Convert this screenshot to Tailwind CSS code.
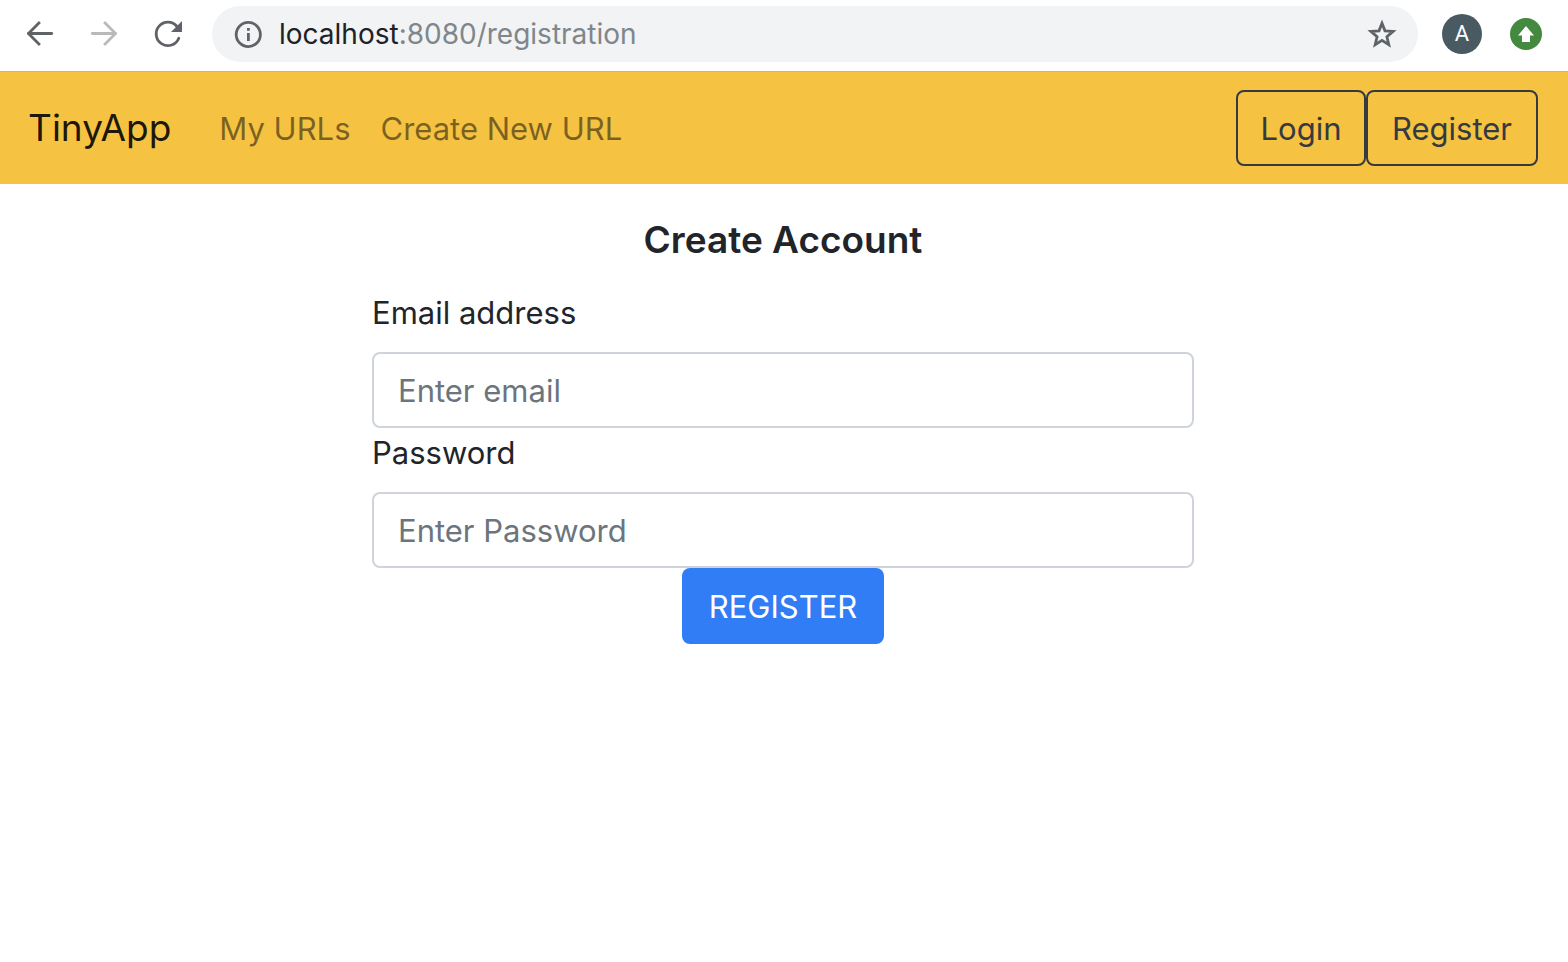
<!DOCTYPE html>
<html lang="en">
<head>
<meta charset="utf-8">
<meta name="viewport" content="width=device-width, initial-scale=1">
<title>TinyApp</title>
<script src="https://cdn.jsdelivr.net/npm/@tailwindcss/browser@4"></script>
</head>
<body class="min-h-screen bg-white font-['Inter',sans-serif] text-[31px] leading-[50px] text-[#212529]">
<header class="flex h-[72px] items-center border-b border-[#b6b6b6] pt-0 pr-[26px] pb-[3px] pl-6">
  <button type="button" aria-label="Back" class="mr-8 flex size-8 items-center justify-center">
    <svg class="size-8" viewBox="0 0 32 32" fill="none" stroke="#5f6368" stroke-width="2.8" stroke-linecap="round" stroke-linejoin="round"><path d="M27.7 15.5H4.5"/><path d="M15.9 4.1L4.5 15.5l11.4 11.4" stroke-linecap="butt"/></svg>
  </button>
  <button type="button" aria-label="Forward" class="mr-8 flex size-8 items-center justify-center">
    <svg class="size-8" viewBox="0 0 32 32" fill="none" stroke="#bababa" stroke-width="2.8" stroke-linecap="round" stroke-linejoin="round"><path d="M4.3 15.5h23.2"/><path d="M16.1 4.1l11.4 11.4-11.4 11.4" stroke-linecap="butt"/></svg>
  </button>
  <button type="button" aria-label="Reload" class="mr-7 flex size-8 items-center justify-center">
    <svg class="size-8" viewBox="0 0 32 32"><path d="M26.8 20.2A11.7 11.7 0 1 1 25 8.5" fill="none" stroke="#5f6368" stroke-width="2.8" stroke-linecap="round"/><path d="M30 3v11H19z" fill="#5f6368"/></svg>
  </button>
  <div class="flex h-14 flex-1 items-center rounded-full bg-[#f1f3f4] pr-5 pl-5">
    <svg class="mr-3 size-8 shrink-0" viewBox="0 0 32 32"><circle cx="16.3" cy="16.5" r="12.1" fill="none" stroke="#5f6368" stroke-width="2.8"/><path d="M15 10h2.8v2.7H15zM15 15h2.8v8H15z" fill="#5f6368"/></svg>
    <p class="flex-1 pl-[3px] text-[28px] leading-8 text-[#80868b]"><span class="text-[#202124]">localhost</span>:8080/registration</p>
    <button type="button" aria-label="Bookmark this page" class="size-8">
      <svg class="size-8" viewBox="0 0 32 32"><path d="M16 5.3l3 7.5 8.1.6-6.2 5.3 1.9 8L16 22.4l-6.8 4.3 1.9-8-6.2-5.3 8.1-.6z" fill="none" stroke="#5f6368" stroke-width="2.8"/></svg>
    </button>
  </div>
  <button type="button" aria-label="Profile A" class="ml-6 size-10 rounded-full bg-[#495a62] font-['Roboto',sans-serif] text-[22px] leading-10 text-white">A</button>
  <button type="button" aria-label="Update available" class="ml-7 size-8">
    <svg class="size-8" viewBox="0 0 32 32"><circle cx="16" cy="16" r="16" fill="#43893f"/><path d="M16 8l8 9.5h-4V24h-8v-6.5H8z" fill="#fff"/></svg>
  </button>
</header>
<nav class="flex h-28 items-center bg-[#f5c242] pr-[30px] pl-7">
  <a href="#" class="text-[37px] leading-[60px] text-black/90">TinyApp</a>
  <a href="#" class="ml-12 pt-0.5 text-black/50">My URLs</a>
  <a href="#" class="ml-[30px] pt-0.5 text-black/50">Create New URL</a>
  <div class="ml-auto flex text-[#343a40]">
    <button type="button" class="h-[76px] w-[130px] rounded-lg border-2 border-[#343a40] pt-0.5">Login</button>
    <button type="button" class="h-[76px] w-[172px] rounded-lg border-2 border-[#343a40] pt-0.5">Register</button>
  </div>
</nav>
<main class="pt-8 pr-0.5">
  <form class="mx-auto flex w-full max-w-[822px] flex-col">
    <h1 class="mb-6 text-center text-[37px] leading-[48px] font-semibold">Create Account</h1>
    <label for="email" class="mb-3.5">Email address</label>
    <input id="email" type="email" placeholder="Enter email" class="h-[76px] w-full rounded-lg border-2 border-[#ced4da] px-6 placeholder:text-[#6c757d]">
    <label for="password" class="mb-3.5">Password</label>
    <input id="password" type="password" placeholder="Enter Password" class="h-[76px] w-full rounded-lg border-2 border-[#ced4da] px-6 placeholder:text-[#6c757d]">
    <button type="submit" class="h-[76px] self-center rounded-lg bg-[#317df6] px-[27px] pt-0.5 text-white">REGISTER</button>
  </form>
</main>
</body>
</html>
